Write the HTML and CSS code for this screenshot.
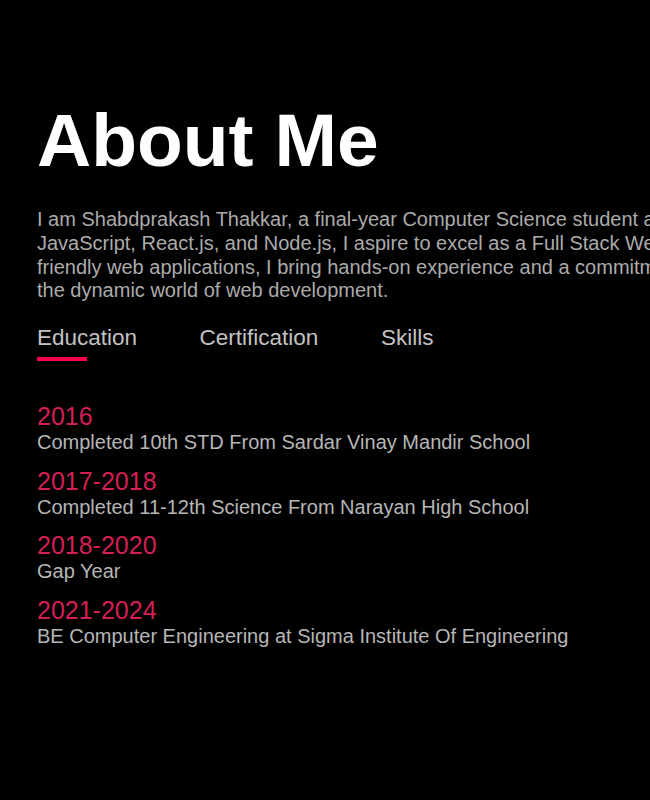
FILE: index.html
```html
<!DOCTYPE html>
<html lang="en">
<head>
<meta charset="utf-8">
<title>About Me</title>
<link rel="stylesheet" href="styles.css">
</head>
<body>
<section class="about">
  <h1 class="sub-title">About Me</h1>
  <p class="intro">I am Shabdprakash Thakkar, a final-year Computer Science student at Sigma Institute Of Engineering. With expertise in HTML, CSS,<br>JavaScript, React.js, and Node.js, I aspire to excel as a Full Stack Web Developer. Passionate about crafting user-<br>friendly web applications, I bring hands-on experience and a commitment to continuous learning, eager to contribute to<br>the dynamic world of web development.</p>
  <div class="tab-titles">
    <span class="tab-link active-link">Education</span>
    <span class="tab-link">Certification</span>
    <span class="tab-link">Skills</span>
  </div>
  <ul class="timeline">
    <li class="item"><span class="year">2016</span><span class="desc">Completed 10th STD From Sardar Vinay Mandir School</span></li>
    <li class="item"><span class="year">2017-2018</span><span class="desc">Completed 11-12th Science From Narayan High School</span></li>
    <li class="item"><span class="year">2018-2020</span><span class="desc">Gap Year</span></li>
    <li class="item"><span class="year">2021-2024</span><span class="desc">BE Computer Engineering at Sigma Institute Of Engineering</span></li>
  </ul>
</section>
</body>
</html>
```
FILE: styles.css
```css
html, body {
  margin: 0;
  padding: 0;
  background: #000;
  overflow: hidden;
}
body {
  width: 650px;
  height: 800px;
  font-family: "Liberation Sans", Arial, sans-serif;
}
.about {
  padding: 97px 0 0 37px;
}
.sub-title {
  margin: 0;
  font-size: 75px;
  font-weight: 700;
  line-height: normal;
  color: #fff;
}
.intro {
  margin: 25px 0 0;
  font-size: 20px;
  line-height: 23.75px;
  color: #ababab;
  white-space: nowrap;
}
.tab-titles {
  display: flex;
  gap: 62.5px;
  margin-top: 22px;
}
.tab-link {
  position: relative;
  font-size: 22.5px;
  line-height: normal;
  color: #c2c2c2;
}
.active-link::after {
  content: "";
  position: absolute;
  left: 0;
  bottom: -10px;
  width: 50%;
  height: 4px;
  background: #ff004f;
}
.timeline {
  list-style: none;
  margin: 51px 0 0;
  padding: 0;
  display: flex;
  flex-direction: column;
  gap: 12.5px;
}
.item {
  display: flex;
  flex-direction: column;
}
.year {
  font-size: 25px;
  line-height: normal;
  color: #d41f55;
}
.desc {
  font-size: 20px;
  line-height: normal;
  color: #b6b6b6;
}
```
